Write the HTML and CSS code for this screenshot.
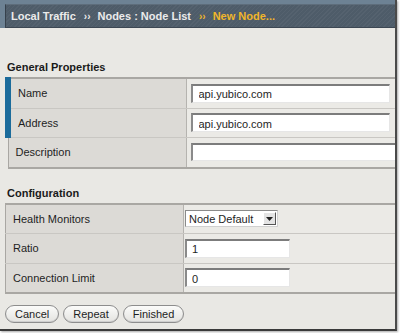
FILE: index.html
```html
<!DOCTYPE html>
<html>
<head>
<meta charset="utf-8">
<link rel="stylesheet" href="styles.css">
</head>
<body>
<div class="window">
  <div class="topbar">
    <div class="crumbs">
      <span class="crumb">Local Traffic</span>
      <span class="sep">››</span>
      <span class="crumb">Nodes : Node List</span>
      <span class="sep gold">››</span>
      <span class="crumb gold">New Node...</span>
    </div>
  </div>

  <h2 class="section-title first">General Properties</h2>
  <table class="props">
    <colgroup><col class="col-label"><col></colgroup>
    <tr>
      <td class="label req">Name</td>
      <td class="value"><input class="field wide" type="text" value="api.yubico.com"></td>
    </tr>
    <tr>
      <td class="label req">Address</td>
      <td class="value"><input class="field wide" type="text" value="api.yubico.com"></td>
    </tr>
    <tr>
      <td class="label">Description</td>
      <td class="value"><input class="field full" type="text" value=""></td>
    </tr>
  </table>

  <h2 class="section-title">Configuration</h2>
  <table class="props config">
    <colgroup><col class="col-label"><col></colgroup>
    <tr>
      <td class="label">Health Monitors</td>
      <td class="value">
        <div class="select"><span class="select-text">Node Default</span><span class="select-btn"><svg width="7" height="4" viewBox="0 0 7 4"><path d="M0 0H7L3.5 4Z" fill="#222"/></svg></span></div>
      </td>
    </tr>
    <tr>
      <td class="label">Ratio</td>
      <td class="value"><input class="field short" type="text" value="1"></td>
    </tr>
    <tr>
      <td class="label">Connection Limit</td>
      <td class="value"><input class="field short" type="text" value="0"></td>
    </tr>
  </table>

  <div class="buttons">
    <button class="btn">Cancel</button>
    <button class="btn">Repeat</button>
    <button class="btn">Finished</button>
  </div>
</div>
</body>
</html>
```

FILE: styles.css
```css
html, body {
  margin: 0;
  padding: 0;
  background: #ffffff;
}
body {
  font-family: "Liberation Sans", Arial, sans-serif;
  width: 401px;
  height: 333px;
  overflow: hidden;
}
.window {
  width: 395px;
  height: 329px;
  background: #e9e8e4;
  border-right: 2px solid #4a4a4a;
  border-bottom: 2px solid #3a3a3a;
  box-shadow: 1px 1px 2px rgba(0,0,0,0.35);
  overflow: hidden;
  box-sizing: content-box;
}
.topbar {
  background: #6d8294;
  padding: 4px 0 0 5px;
}
.crumbs {
  height: 22px;
  background-color: #4e5c69;
  background-image: repeating-linear-gradient(135deg, rgba(255,255,255,0.04) 0 1px, rgba(0,0,0,0) 1px 3px);
  border-left: 1px solid #36414c;
  border-top: 1px solid #5e6d7b;
  border-bottom: 1px solid #3c4753;
  display: flex;
  align-items: center;
  padding-left: 5px;
  font-weight: bold;
  font-size: 11px;
  color: #ebebeb;
  white-space: nowrap;
}
.sep {
  margin: 0 7px 0 8px;
  font-size: 10px;
}
.gold {
  color: #f1b62a;
}
.section-title {
  margin: 0;
  font-size: 11px;
  font-weight: bold;
  color: #1a1a1a;
  padding: 0 0 3px 7px;
  line-height: 14px;
}
.section-title.first {
  padding-top: 32px;
}
.section-title:not(.first) {
  padding-top: 17px;
}
.props {
  border-collapse: collapse;
  table-layout: fixed;
  margin-left: 5px;
  width: 400px;
  font-size: 11px;
  color: #1e1e1e;
}
.col-label {
  width: 178px;
}
.props td {
  border: 1px solid #c9c7c3;
  padding: 0;
}
.props tr:first-child td {
  border-top: 2px solid #a9a7a3;
}
.props tr:last-child td {
  border-bottom: 2px solid #a9a7a3;
}
.label {
  height: 28.5px;
  background: #dcdad6;
  padding-left: 7px !important;
  border-left: 1px solid #a9a7a3 !important;
  border-right: 1px solid #b5b3af !important;
}
.label.req {
  border-left: 6px solid #1b6b9b !important;
}
.value {
  background: #ebeae6;
  padding-left: 4px !important;
}
.config .value {
  padding-left: 1px !important;
}
.field {
  display: block;
  box-sizing: border-box;
  height: 19px;
  margin: 0;
  padding: 1px 0 0 6px;
  font-family: "Liberation Sans", Arial, sans-serif;
  font-size: 11px;
  color: #1e1e1e;
  background: #ffffff;
  border-style: solid;
  border-width: 2px 1px 1px 2px;
  border-color: #7c7c7c #e6e6e6 #e6e6e6 #8a8a8a;
  outline: none;
}
.field.wide {
  width: 199px;
}
.field.full {
  width: 220px;
  height: 18px;
}
.field.short {
  width: 105px;
  padding-left: 5px;
}
.select {
  display: flex;
  align-items: center;
  width: 93px;
  height: 17px;
  box-sizing: border-box;
  background: #ffffff;
  border-style: solid;
  border-width: 1px;
  border-color: #8a8a8a #d0d0d0 #d0d0d0 #8a8a8a;
}
.select-text {
  flex: 1;
  padding-left: 3px;
  font-size: 11px;
}
.select-btn {
  width: 13px;
  height: 13px;
  margin-right: 1px;
  box-sizing: border-box;
  background: #e4e4e4;
  border-style: solid;
  border-width: 1px;
  border-color: #ffffff #555555 #555555 #ffffff;
  display: flex;
  align-items: center;
  justify-content: center;
}
.buttons {
  display: flex;
  gap: 4px;
  padding: 11px 0 0 5px;
}
.btn {
  height: 18px;
  padding: 0 9px;
  font-family: "Liberation Sans", Arial, sans-serif;
  font-size: 11px;
  color: #1e1e1e;
  background: linear-gradient(#fbfbfa, #e4e3e0);
  border: 1px solid #8d8d8d;
  border-radius: 9px;
  box-shadow: inset 0 -1px 0 #cfcfcf;
}
```
